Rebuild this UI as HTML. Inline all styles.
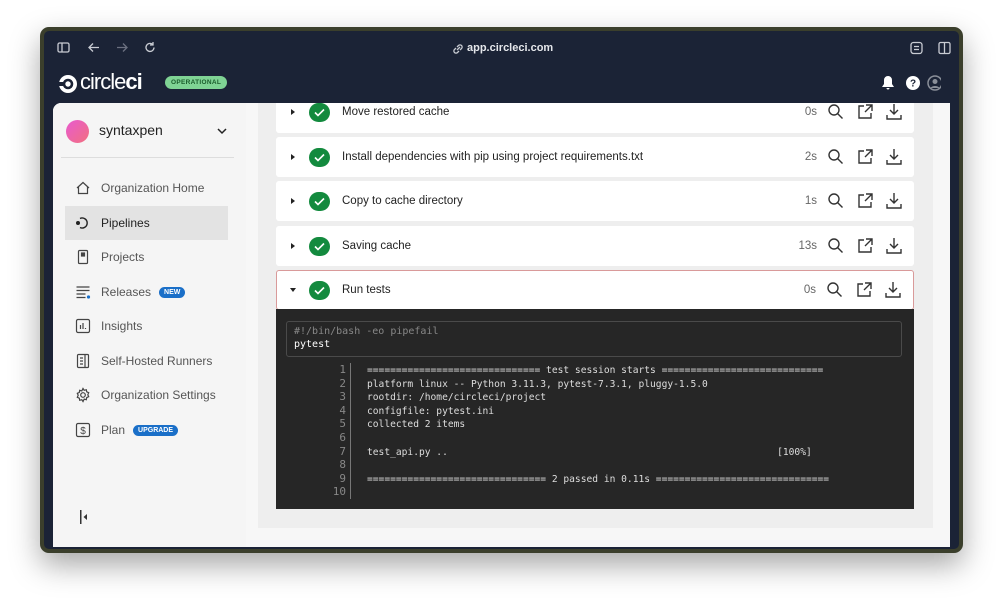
<!DOCTYPE html>
<html><head><meta charset="utf-8"><style>
*{box-sizing:border-box;margin:0;padding:0}
body{width:1003px;height:607px;background:#fff;font-family:"Liberation Sans",sans-serif;position:relative;overflow:hidden}
.win{position:absolute;left:40px;top:27px;width:923px;height:526px;background:#1b2336;border:4px solid #3b3f2c;border-radius:9px;box-shadow:0 12px 30px rgba(0,0,0,.35);overflow:hidden}
.abs{position:absolute}
.content{position:absolute;left:9px;top:72px;width:897px;height:444px;background:#f7f7f7;border-radius:8px 0 0 0;overflow:hidden}
.side{position:absolute;left:0;top:0;width:193px;height:444px;background:#f5f5f5}
.nav{position:absolute;left:12px;width:163px;height:34px;display:flex;align-items:center;font-size:12px;color:#555}
.nav svg{margin-left:10px;margin-right:10px}
.badge{background:#1a6fc8;color:#fff;font-size:7px;font-weight:bold;border-radius:8px;padding:2px 5px;margin-left:8px}
.panel{position:absolute;left:205px;top:0;width:675px;height:425px;background:#eeeeee}
.row{position:absolute;left:18px;width:638px;height:40px;background:#fff;border-radius:3px;display:flex;align-items:center;font-size:11.5px;color:#222}
.tri{width:0;height:0;border-left:4px solid #222;border-top:3px solid transparent;border-bottom:3px solid transparent;margin-left:15px}
.chk{width:21px;height:19px;border-radius:10px;background:#138a3e;margin-left:14px;margin-right:12px;display:flex;align-items:center;justify-content:center}
.r{margin-left:auto;display:flex;align-items:center;gap:0}
.t{color:#666;width:30px;text-align:right;margin-right:10px}
.r svg{margin-right:11px}
.term{position:absolute;left:18px;top:206px;width:638px;height:200px;background:#262626;font-family:"DejaVu Sans Mono","Liberation Mono",monospace;font-size:10px}
.cmd{position:absolute;left:10px;top:12px;width:616px;height:36px;border:1px solid #4a4a4a;border-radius:3px;padding:3px 7px;line-height:13px;color:#fff}
.ln{position:absolute;left:55px;top:54px;width:20px;text-align:right;color:#888;line-height:13.6px;font-size:11px;border-right:1px solid #777;padding-right:4px}
.out{position:absolute;left:91px;top:55px;color:#ddd;line-height:13.6px;white-space:pre;font-size:9.6px}
</style></head><body>
<div class="win">
 <svg class="abs" style="left:13px;top:10px" width="100" height="14" viewBox="0 0 100 14" fill="none" stroke="#c9ccd3" stroke-width="1.3">
  <rect x="1" y="2" width="11" height="9" rx="1.5"/><line x1="5" y1="2" x2="5" y2="11"/>
  <path d="M42 6.5H32M36 2.5l-4 4 4 4"/>
  <path d="M60 6.5h10M66 2.5l4 4-4 4" stroke="#6b7080"/>
  <path d="M97 6.5a4 4 0 1 1-1.5-3.2M96 1v3h-3"/>
 </svg>
 <svg class="abs" style="left:408px;top:12px" width="12" height="12" viewBox="0 0 12 12" fill="none" stroke="#c9ccd3" stroke-width="1.3"><path d="M5 7l3-3M4 5L2.5 6.5a2 2 0 0 0 3 3L7 8M8 7l1.5-1.5a2 2 0 0 0-3-3L5 4"/></svg>
 <div class="abs" style="left:423px;top:11px;font-size:11px;color:#e5e7eb;font-weight:bold">app.circleci.com</div>
 <svg class="abs" style="left:866px;top:10px" width="50" height="14" viewBox="0 0 50 14" fill="none" stroke="#c9ccd3" stroke-width="1.3"><rect x="1" y="1.5" width="11" height="11" rx="2.5"/><path d="M4 5.5h5M4 8.5h5"/><rect x="29" y="1.5" width="11" height="11" rx="1.5"/><line x1="34.5" y1="1.5" x2="34.5" y2="12.5"/></svg>
 <svg class="abs" style="left:14px;top:43px" width="20" height="20" viewBox="0 0 20 20"><circle cx="10" cy="10" r="9" fill="#fff"/><circle cx="10" cy="10" r="5.3" fill="#1b2336"/><circle cx="10" cy="10" r="2.7" fill="#fff"/><rect x="0" y="8" width="5" height="4" fill="#1b2336"/></svg>
 <div class="abs" style="left:36px;top:38px;font-size:22px;color:#fff;letter-spacing:-1px"><span>circle</span><b>ci</b></div>
 <div class="abs" style="left:121px;top:45px;background:#7fd394;color:#1b5c2c;font-size:6.5px;font-weight:bold;border-radius:8px;padding:3px 6px;letter-spacing:.3px">OPERATIONAL</div>
 <svg class="abs" style="left:835px;top:43px" width="62" height="18" viewBox="0 0 62 18"><path d="M9 2a4 4 0 0 0-4 4v4l-2 3h12l-2-3V6a4 4 0 0 0-4-4zM7.5 14a1.5 1.5 0 0 0 3 0z" fill="#fff"/><circle cx="34" cy="9" r="7" fill="#fff"/><text x="34" y="12.5" font-size="10" font-weight="bold" text-anchor="middle" fill="#1b2336" font-family="Liberation Sans">?</text><circle cx="56" cy="9" r="7" fill="none" stroke="#8a8f99" stroke-width="1.5"/><circle cx="56" cy="7.5" r="2.5" fill="#8a8f99"/><path d="M51.5 14a5 3.5 0 0 1 9 0" fill="#8a8f99"/></svg>
 <div class="content">
  <div class="side">
   <div class="abs" style="left:13px;top:17px;width:23px;height:23px;border-radius:50%;background:linear-gradient(135deg,#e85ad0,#f2707f)"></div>
   <div class="abs" style="left:46px;top:19px;font-size:14px;color:#222">syntaxpen</div>
   <svg class="abs" style="left:164px;top:25px" width="10" height="7" viewBox="0 0 10 7" fill="none" stroke="#222" stroke-width="1.5"><path d="M1 1l4 4 4-4"/></svg>
   <div class="abs" style="left:8px;top:54px;width:173px;height:1px;background:#ddd"></div>
   <div class="nav" style="top:68px"><svg width="16" height="16" viewBox="0 0 16 16" fill="none" stroke="#444" stroke-width="1.2"><path d="M2 8L8 2.5 14 8M3.5 7v6.5h9V7"/></svg>Organization Home</div>
   <div class="nav" style="top:103px;background:#e3e3e3;color:#222"><svg width="16" height="16" viewBox="0 0 16 16" fill="none" stroke="#222" stroke-width="1.4"><path d="M5 3.5A5 5 0 1 1 5 12.5"/><circle cx="3" cy="8" r="1.3" fill="#222"/></svg>Pipelines</div>
   <div class="nav" style="top:137px"><svg width="16" height="16" viewBox="0 0 16 16" fill="none" stroke="#444" stroke-width="1.2"><rect x="3.5" y="1.5" width="9" height="13" rx="1"/><rect x="6.5" y="4" width="3" height="3" fill="#444"/></svg>Projects</div>
   <div class="nav" style="top:172px"><svg width="16" height="16" viewBox="0 0 16 16" fill="none" stroke="#444" stroke-width="1.3"><path d="M1.5 3h13M1.5 6.5h13M1.5 10h9M1.5 13.5h9"/><circle cx="13.5" cy="13" r="1.6" fill="#1a6fc8" stroke="none"/></svg>Releases<span class="badge">NEW</span></div>
   <div class="nav" style="top:206px"><svg width="16" height="16" viewBox="0 0 16 16" fill="none" stroke="#444" stroke-width="1.2"><rect x="1.5" y="1.5" width="13" height="13" rx="1.5"/><path d="M5.5 11V7M8 11V5M10.5 11v-1"/></svg>Insights</div>
   <div class="nav" style="top:241px"><svg width="16" height="16" viewBox="0 0 16 16" fill="none" stroke="#444" stroke-width="1.2"><rect x="2.5" y="1.5" width="11" height="13" rx="1"/><path d="M10 1.5v13M5 5h3M5 8h3M5 11h3"/></svg>Self-Hosted Runners</div>
   <div class="nav" style="top:275px"><svg width="16" height="16" viewBox="0 0 16 16" fill="none" stroke="#444" stroke-width="1.2"><circle cx="8" cy="8" r="2.3"/><path d="M8 1.5l1.2 1.8 2.1-.6.4 2.1 2 .9-.9 2 .9 2-2 .9-.4 2.1-2.1-.6L8 14.5l-1.2-1.8-2.1.6-.4-2.1-2-.9.9-2-.9-2 2-.9.4-2.1 2.1.6z"/></svg>Organization Settings</div>
   <div class="nav" style="top:310px"><svg width="16" height="16" viewBox="0 0 16 16" fill="none" stroke="#444" stroke-width="1.2"><rect x="1.5" y="1.5" width="13" height="13" rx="1.5"/><text x="8" y="12" font-size="10" text-anchor="middle" fill="#444" stroke="none" font-family="Liberation Sans">$</text></svg>Plan<span class="badge">UPGRADE</span></div>
   <svg class="abs" style="left:26px;top:407px" width="10" height="14" viewBox="0 0 10 14"><rect x="1" y="0" width="1.5" height="14" fill="#333"/><path d="M8 4v6L4.5 7z" fill="#333"/></svg>
  </div>
  <div class="panel">
   <div class="row" style="top:-12px;height:42px"><div class="tri"></div><div class="chk"><svg width="11" height="9" viewBox="0 0 11 9" fill="none" stroke="#fff" stroke-width="1.6"><path d="M1 4.5l3 3 6-6"/></svg></div>Move restored cache<div class="r"><span class="t">0s</span>
    <svg width="18" height="18" viewBox="0 0 18 18" fill="none" stroke="#333" stroke-width="1.4"><circle cx="7" cy="7" r="5"/><path d="M10.5 10.5l5 5"/></svg><svg width="18" height="18" viewBox="0 0 18 18" fill="none" stroke="#333" stroke-width="1.4"><path d="M8 3H3v12h12v-5M10 2h6v6M16 2l-7 7"/></svg><svg width="18" height="18" viewBox="0 0 18 18" fill="none" stroke="#333" stroke-width="1.4"><path d="M9 1v10M5 7l4 4 4-4M2 12v4h14v-4"/></svg></div></div>
   <div class="row" style="top:34px"><div class="tri"></div><div class="chk"><svg width="11" height="9" viewBox="0 0 11 9" fill="none" stroke="#fff" stroke-width="1.6"><path d="M1 4.5l3 3 6-6"/></svg></div>Install dependencies with pip using project requirements.txt<div class="r"><span class="t">2s</span>
    <svg width="18" height="18" viewBox="0 0 18 18" fill="none" stroke="#333" stroke-width="1.4"><circle cx="7" cy="7" r="5"/><path d="M10.5 10.5l5 5"/></svg><svg width="18" height="18" viewBox="0 0 18 18" fill="none" stroke="#333" stroke-width="1.4"><path d="M8 3H3v12h12v-5M10 2h6v6M16 2l-7 7"/></svg><svg width="18" height="18" viewBox="0 0 18 18" fill="none" stroke="#333" stroke-width="1.4"><path d="M9 1v10M5 7l4 4 4-4M2 12v4h14v-4"/></svg></div></div>
   <div class="row" style="top:78px"><div class="tri"></div><div class="chk"><svg width="11" height="9" viewBox="0 0 11 9" fill="none" stroke="#fff" stroke-width="1.6"><path d="M1 4.5l3 3 6-6"/></svg></div>Copy to cache directory<div class="r"><span class="t">1s</span>
    <svg width="18" height="18" viewBox="0 0 18 18" fill="none" stroke="#333" stroke-width="1.4"><circle cx="7" cy="7" r="5"/><path d="M10.5 10.5l5 5"/></svg><svg width="18" height="18" viewBox="0 0 18 18" fill="none" stroke="#333" stroke-width="1.4"><path d="M8 3H3v12h12v-5M10 2h6v6M16 2l-7 7"/></svg><svg width="18" height="18" viewBox="0 0 18 18" fill="none" stroke="#333" stroke-width="1.4"><path d="M9 1v10M5 7l4 4 4-4M2 12v4h14v-4"/></svg></div></div>
   <div class="row" style="top:123px"><div class="tri"></div><div class="chk"><svg width="11" height="9" viewBox="0 0 11 9" fill="none" stroke="#fff" stroke-width="1.6"><path d="M1 4.5l3 3 6-6"/></svg></div>Saving cache<div class="r"><span class="t">13s</span>
    <svg width="18" height="18" viewBox="0 0 18 18" fill="none" stroke="#333" stroke-width="1.4"><circle cx="7" cy="7" r="5"/><path d="M10.5 10.5l5 5"/></svg><svg width="18" height="18" viewBox="0 0 18 18" fill="none" stroke="#333" stroke-width="1.4"><path d="M8 3H3v12h12v-5M10 2h6v6M16 2l-7 7"/></svg><svg width="18" height="18" viewBox="0 0 18 18" fill="none" stroke="#333" stroke-width="1.4"><path d="M9 1v10M5 7l4 4 4-4M2 12v4h14v-4"/></svg></div></div>
   <div class="row" style="top:167px;border:1px solid #d99a9a"><div class="tri" style="border-left:3px solid transparent;border-right:3px solid transparent;border-top:4px solid #222;border-bottom:0;margin-left:13px"></div><div class="chk" style="margin-left:13px"><svg width="11" height="9" viewBox="0 0 11 9" fill="none" stroke="#fff" stroke-width="1.6"><path d="M1 4.5l3 3 6-6"/></svg></div>Run tests<div class="r"><span class="t">0s</span>
    <svg width="18" height="18" viewBox="0 0 18 18" fill="none" stroke="#333" stroke-width="1.4"><circle cx="7" cy="7" r="5"/><path d="M10.5 10.5l5 5"/></svg><svg width="18" height="18" viewBox="0 0 18 18" fill="none" stroke="#333" stroke-width="1.4"><path d="M8 3H3v12h12v-5M10 2h6v6M16 2l-7 7"/></svg><svg width="18" height="18" viewBox="0 0 18 18" fill="none" stroke="#333" stroke-width="1.4"><path d="M9 1v10M5 7l4 4 4-4M2 12v4h14v-4"/></svg></div></div>
   <div class="term">
    <div class="cmd"><span style="color:#888">#!/bin/bash -eo pipefail</span><br>pytest</div>
    <div class="ln">1<br>2<br>3<br>4<br>5<br>6<br>7<br>8<br>9<br>10</div>
<div class="out">============================== test session starts ============================
platform linux -- Python 3.11.3, pytest-7.3.1, pluggy-1.5.0
rootdir: /home/circleci/project
configfile: pytest.ini
collected 2 items

test_api.py ..                                                         [100%]

=============================== 2 passed in 0.11s ==============================</div>
   </div>
  </div>
 </div>
</div>
</body></html>
